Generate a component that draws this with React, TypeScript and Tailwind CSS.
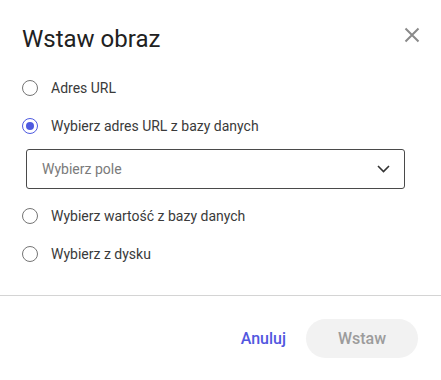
import React, { useState } from "react";

function Radio({ checked, label, onClick }: { checked: boolean; label: string; onClick: () => void }) {
  return (
    <div className="flex h-[38px] items-center cursor-pointer" onClick={onClick}>
      <div
        className={
          "flex h-[16px] w-[16px] items-center justify-center rounded-full border-[1.5px] " +
          (checked ? "border-[#4e5ae0]" : "border-[#757575]")
        }
      >
        {checked && <div className="h-[8px] w-[8px] rounded-full bg-[#4e5ae0]" />}
      </div>
      <span className="ml-[13px] text-[14px] leading-[20px] text-[#3a3a3a]">{label}</span>
    </div>
  );
}

export default function App() {
  const [sel, setSel] = useState(1);
  const opts = ["Adres URL", "Wybierz adres URL z bazy danych", "Wybierz wartość z bazy danych", "Wybierz z dysku"];
  return (
    <div
      className="h-[380px] w-[441px] bg-white"
      style={{ fontFamily: "Roboto, 'Liberation Sans', sans-serif" }}
    >
      <div className="flex items-start justify-between pl-[22px] pr-[21px] pt-[23px]">
        <h1 className="text-[24px] leading-[32px] font-normal text-[#212121]">Wstaw obraz</h1>
        <button className="mt-[4px] flex h-[16px] w-[16px] items-center justify-center">
          <svg width="16" height="16" viewBox="0 0 16 16">
            <path d="M1.5 1.5 L14.5 14.5 M14.5 1.5 L1.5 14.5" stroke="#8a8a8a" strokeWidth="2" />
          </svg>
        </button>
      </div>
      <div className="mt-[14px] pl-[22px] pr-[36px]">
        <Radio checked={sel === 0} label={opts[0]} onClick={() => setSel(0)} />
        <Radio checked={sel === 1} label={opts[1]} onClick={() => setSel(1)} />
        <div className="ml-[4px] mt-[4px] flex h-[40px] items-center justify-between rounded-[3px] border border-[#4a4a4a] pl-[15px] pr-[14px]">
          <span className="text-[14px] leading-[20px] text-[#7a7a7a]">Wybierz pole</span>
          <svg width="13" height="8" viewBox="0 0 13 8">
            <path d="M1 1 L6.5 6.5 L12 1" fill="none" stroke="#333" strokeWidth="1.6" />
          </svg>
        </div>
        <div className="mt-[8px]">
          <Radio checked={sel === 2} label={opts[2]} onClick={() => setSel(2)} />
          <Radio checked={sel === 3} label={opts[3]} onClick={() => setSel(3)} />
        </div>
      </div>
      <div className="mt-[22px] h-px w-full bg-[#d4d4d4]" />
      <div className="flex items-center justify-end gap-[20px] pr-[23px] pt-[23px]">
        <button className="text-[16px] font-medium leading-[20px] text-[#5257e0]">Anuluj</button>
        <button className="flex h-[39px] w-[112px] items-center justify-center rounded-full bg-[#f2f2f2] text-[16px] font-medium text-[#9c9c9c]">
          Wstaw
        </button>
      </div>
    </div>
  );
}
